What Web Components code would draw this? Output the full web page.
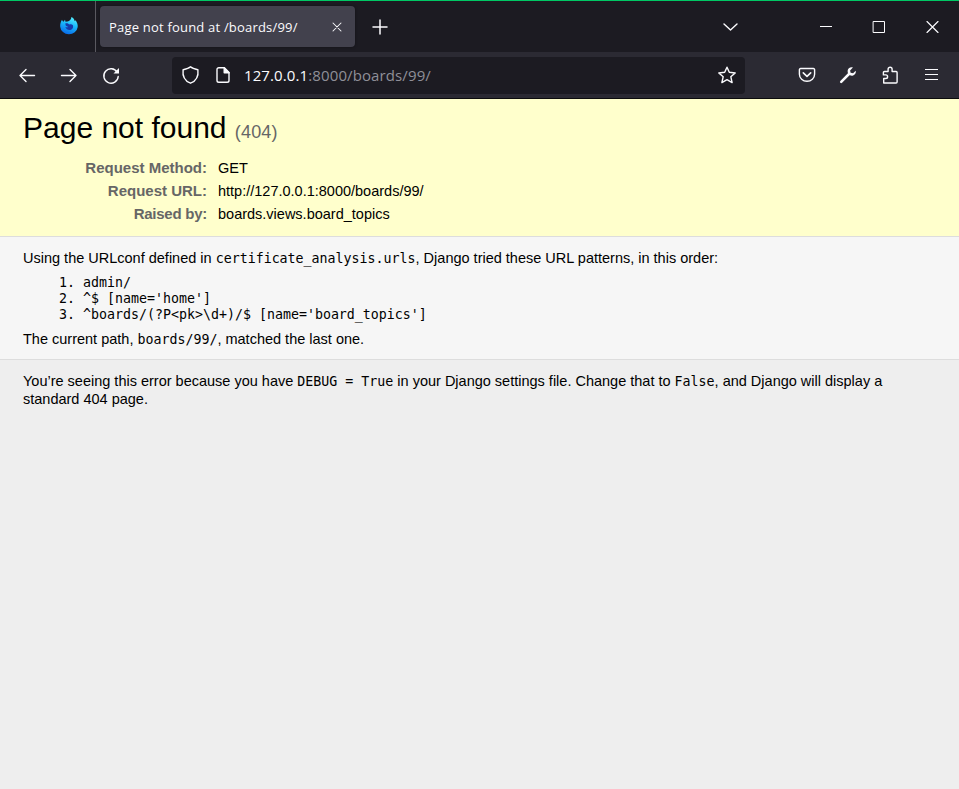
<!DOCTYPE html>
<html lang="en"><head><meta charset="utf-8"><title>Page not found at /boards/99/</title>
<style>html,body{margin:0;height:100%;overflow:hidden;background:#eee}</style></head><body>
<browser-window></browser-window>
<script>
const define=(name,html)=>customElements.define(name,class extends HTMLElement{
  constructor(){super();const t=document.createElement('template');t.innerHTML=html;this.attachShadow({mode:'open'}).append(t.content.cloneNode(true));}
});

const ICONS={
back:'<path d="M15.500 8.500H1M7 2.500L1 8.500l6 6"/>',
forward:'<path d="M.5 8.500H15M9 2.500L15 8.500l-6 6"/>',
reload:'<path d="M14.200 5.300A7.200 7.200 0 1 0 15.200 9.500"/><path d="M16 1v5.500h-5.500z" fill="currentColor" stroke="none"/>',
shield:'<path d="M8.500 -.2C6.500 1.700 4 2.200 1.100 2.800.3 9 2.700 13.800 8.500 16.200c5.800-2.400 8.200-7.200 7.400-13.400C13 2.200 10.500 1.700 8.500-.2z"/>',
page:'<path d="M9.300.8H3.800a1.800 1.800 0 0 0-1.800 1.800v10.800a1.800 1.800 0 0 0 1.800 1.800h8.400a1.800 1.800 0 0 0 1.800-1.800V5.500z"/><path d="M9.200.8v4.900h4.900z" fill="currentColor"/>',
star:'<path d="M8 .2l2.300 5.100 5.900.7-4.400 3.700 1.300 5.900L8 12.700l-5.100 2.900 1.300-5.900L-.2 6l5.900-.7z"/>',
pocket:'<path d="M1.700 1.500h12.600a1.300 1.300 0 0 1 1.300 1.500v4.200a7.600 7.100 0 0 1-15.200 0V3a1.300 1.300 0 0 1 1.300-1.500z"/><path d="M4.300 5.800L8 9.300l3.700-3.500" stroke-width="1.600"/>',
wrench:'<path d="M1.200 14.800L9 7" stroke-width="2.500"/><path d="M12.900.4c-2.600-.8-5.200 1-5.300 3.700-.1 3 2 5 4.800 4.600 2.300-.3 3.900-2.600 3.300-4.900l-2.600 2.500-2.500-.5-.5-2.400z" fill="currentColor" stroke="none"/>',
puzzle:'<path d="M1.700 16V11.500h2.100a1.700 1.700 0 0 0 0-3.600H1.400V5.500a1 1 0 0 1 1-1h3.700V2.200a2 2 0 0 1 4 0v2.300h4a1 1 0 0 1 1 1V15a1 1 0 0 1-1 1z"/>',
menu:'<path d="M1 2.500h13M1 7.500h13M1 12.500h13" stroke-linecap="butt" stroke-width="1.200"/>',
close:'<path d="M4 4l8 8M12 4l-8 8" stroke-width="1.050"/>',
plus:'<path d="M8 1v14M1 8h14" stroke-width="1.500"/>',
chevron:'<path d="M2 5L8.500 11 15 5"/>',
minimize:'<path d="M2 7.500h12" stroke-width="1" stroke-linecap="butt"/>',
maximize:'<path d="M2.500 2.500h11v11h-11z" stroke-width="1" stroke-linejoin="miter"/>',
exit:'<path d="M3 2.500l11 11M14 2.500l-11 11" stroke-width="1.150"/>'};
customElements.define('ui-icon',class extends HTMLElement{
  constructor(){super();this.attachShadow({mode:'open'});}
  connectedCallback(){this.shadowRoot.innerHTML=`<style>:host{display:block;width:16px;height:16px;flex:none;color:#fbfbfe}svg{display:block;overflow:visible}</style><svg width="16" height="16" viewBox="0 0 16 16" fill="none" stroke="currentColor" stroke-width="1.400" stroke-linecap="round" stroke-linejoin="round">${ICONS[this.getAttribute('name')]}</svg>`;}
});

define('firefox-logo',`<style>:host{display:block;width:18px;height:18px;flex:none}svg{display:block}</style>
<svg width="18" height="18" viewBox="0 0 18 18"><defs><linearGradient id="g" x1=".7" y1="0" x2=".35" y2="1"><stop offset="0" stop-color="#55f0ff"/><stop offset=".45" stop-color="#1ab8fa"/><stop offset="1" stop-color="#0869e8"/></linearGradient></defs>
<path d="M2 2.800c.3 1 .8 1.600 1.500 2L5 2.700l.5 2.100 2-.2C9.500 4 11.300 2.500 11.400 0c2 1 3.100 2.600 3.300 4.200l.8-1C17 5 18 7.500 17.700 10a8.800 8.300 0 0 1-17.500-.3C0 7 .8 4.800 2 2.800z" fill="url(#g)"/>
<path d="M5.300 6.600c1.600-.6 3 .1 3.900.9 1.500-.6 3-.2 3.700.7.800 2.700-1 4.800-3.500 4.800-2 0-3.800-1.300-4-3.200 1 .7 2 .7 3 .1-.7-.6-2.100-.6-2.700-1.500z" fill="#173aa8"/></svg>`);

define('tab-strip',`<style>:host{display:flex;height:51px;background:#1c1b22;border-top:1px solid #00c864;align-items:center}
.pin{display:flex;width:96px;height:51px;align-items:center;justify-content:flex-end;padding-right:17px;box-sizing:border-box;border-right:1px solid #5a5960}
.pin firefox-logo{margin-bottom:1px}
.tab{display:flex;align-items:center;box-sizing:border-box;width:255px;height:41px;margin-left:4px;padding:0 10px 0 9px;border-radius:4px;background:#42414d;box-shadow:0 0 3px #0006;color:#fbfbfe;font:13px/20px "Open Sans","Noto Sans",sans-serif;letter-spacing:.2px}
.tab span{flex:1;white-space:nowrap}
.new{margin-left:17px}.list{margin-left:auto}.controls{display:flex;gap:37px;margin-left:80px;margin-right:19px}</style>
<div class="pin"><firefox-logo></firefox-logo></div><div class="tab"><span><slot></slot></span><ui-icon name="close"></ui-icon></div>
<ui-icon class="new" name="plus"></ui-icon><ui-icon class="list" name="chevron"></ui-icon>
<div class="controls"><ui-icon name="minimize"></ui-icon><ui-icon name="maximize"></ui-icon><ui-icon name="exit"></ui-icon></div>`);

define('nav-toolbar',`<style>:host{display:flex;height:46px;background:#2b2a33;border-bottom:1px solid #0c0c0d;align-items:center}
.nav{display:flex;gap:26px;padding-left:19px;width:153px}
.url{display:flex;align-items:center;box-sizing:border-box;width:573px;height:37px;border-radius:4px;background:#1c1b22;padding:0 10px;font:15px/22px "Open Sans","Noto Sans",sans-serif;letter-spacing:.11px;color:#8f8f98}
.url ui-icon+ui-icon{margin-left:17px}.text{flex:1;margin-left:13px;white-space:nowrap}b{font-weight:400;color:#fbfbfe}
.tools{display:flex;gap:26px;margin-left:auto;margin-right:19px}.tools :first-child{margin-right:-1px}</style>
<div class="nav"><ui-icon name="back"></ui-icon><ui-icon name="forward"></ui-icon><ui-icon name="reload"></ui-icon></div>
<div class="url"><ui-icon name="shield"></ui-icon><ui-icon name="page"></ui-icon><span class="text"><b>127.0.0.1</b>:8000/boards/99/</span><ui-icon name="star"></ui-icon></div>
<div class="tools"><ui-icon name="pocket"></ui-icon><ui-icon name="wrench"></ui-icon><ui-icon name="puzzle"></ui-icon><ui-icon name="menu"></ui-icon></div>`);

define('code-text',`<style>:host{font:13.290px/1px "DejaVu Sans Mono",monospace}</style><slot></slot>`);
define('meta-row',`<style>:host{display:grid;grid-template-columns:184px 1fr;column-gap:11px;height:23px;line-height:23px}.label{text-align:right;color:#666;font-weight:bold;font-size:15px;line-height:21px}</style><span class="label"><slot name="label"></slot></span><span><slot></slot></span>`);
define('error-summary',`<style>:host{display:block;box-sizing:border-box;height:138px;background:#ffc;border-bottom:1px solid #ddd;padding:9px 23px 0}
h1{margin:0 0 9px;height:40px;font-weight:400;font-size:30px;line-height:40px}small{font-size:18px;color:#666;letter-spacing:.15px}.tight{letter-spacing:-.25px}</style>
<h1>Page not found <small>(404)</small></h1>
<meta-row><span slot="label">Request Method:</span>GET</meta-row><meta-row><span slot="label">Request URL:</span>http://127.0.0.1:8000/boards/99/</meta-row><meta-row><span slot="label" class="tight">Raised by:</span>boards.views.board_topics</meta-row>`);
define('url-patterns',`<style>:host{display:block;box-sizing:border-box;height:123px;background:#f6f6f6;border-bottom:1px solid #ddd;padding:12px 23px 0}
p{margin:0;line-height:18px;height:18px;white-space:nowrap}ol{margin:8px 0 7px;padding-left:60px;font:13.290px/16px "DejaVu Sans Mono",monospace;white-space:pre}li{height:16px}</style>
<p>Using the URLconf defined in <code-text>certificate_analysis.urls</code-text>, Django tried these URL patterns, in this order:</p>
<ol><li>admin/</li><li>^$ [name='home']</li><li>^boards/(?P&lt;pk&gt;\\d+)/$ [name='board_topics']</li></ol>
<p>The current path, <code-text>boards/99/</code-text>, matched the last one.</p>`);
define('debug-note',`<style>:host{display:block;padding:12px 23px;line-height:18px}p{margin:0}span{display:block;height:18px;white-space:nowrap}</style>
<p><span>You’re seeing this error because you have <code-text>DEBUG = True</code-text> in your Django settings file. Change that to <code-text>False</code-text>, and Django will display a</span> <span>standard 404 page.</span></p>`);
define('browser-window',`<style>:host{display:block;width:959px;height:789px;background:#eee;color:#000;font:14.500px "Liberation Sans",Arial,sans-serif}</style>
<tab-strip>Page not found at /boards/99/</tab-strip><nav-toolbar></nav-toolbar><error-summary></error-summary><url-patterns></url-patterns><debug-note></debug-note>`);
</script></body></html>
